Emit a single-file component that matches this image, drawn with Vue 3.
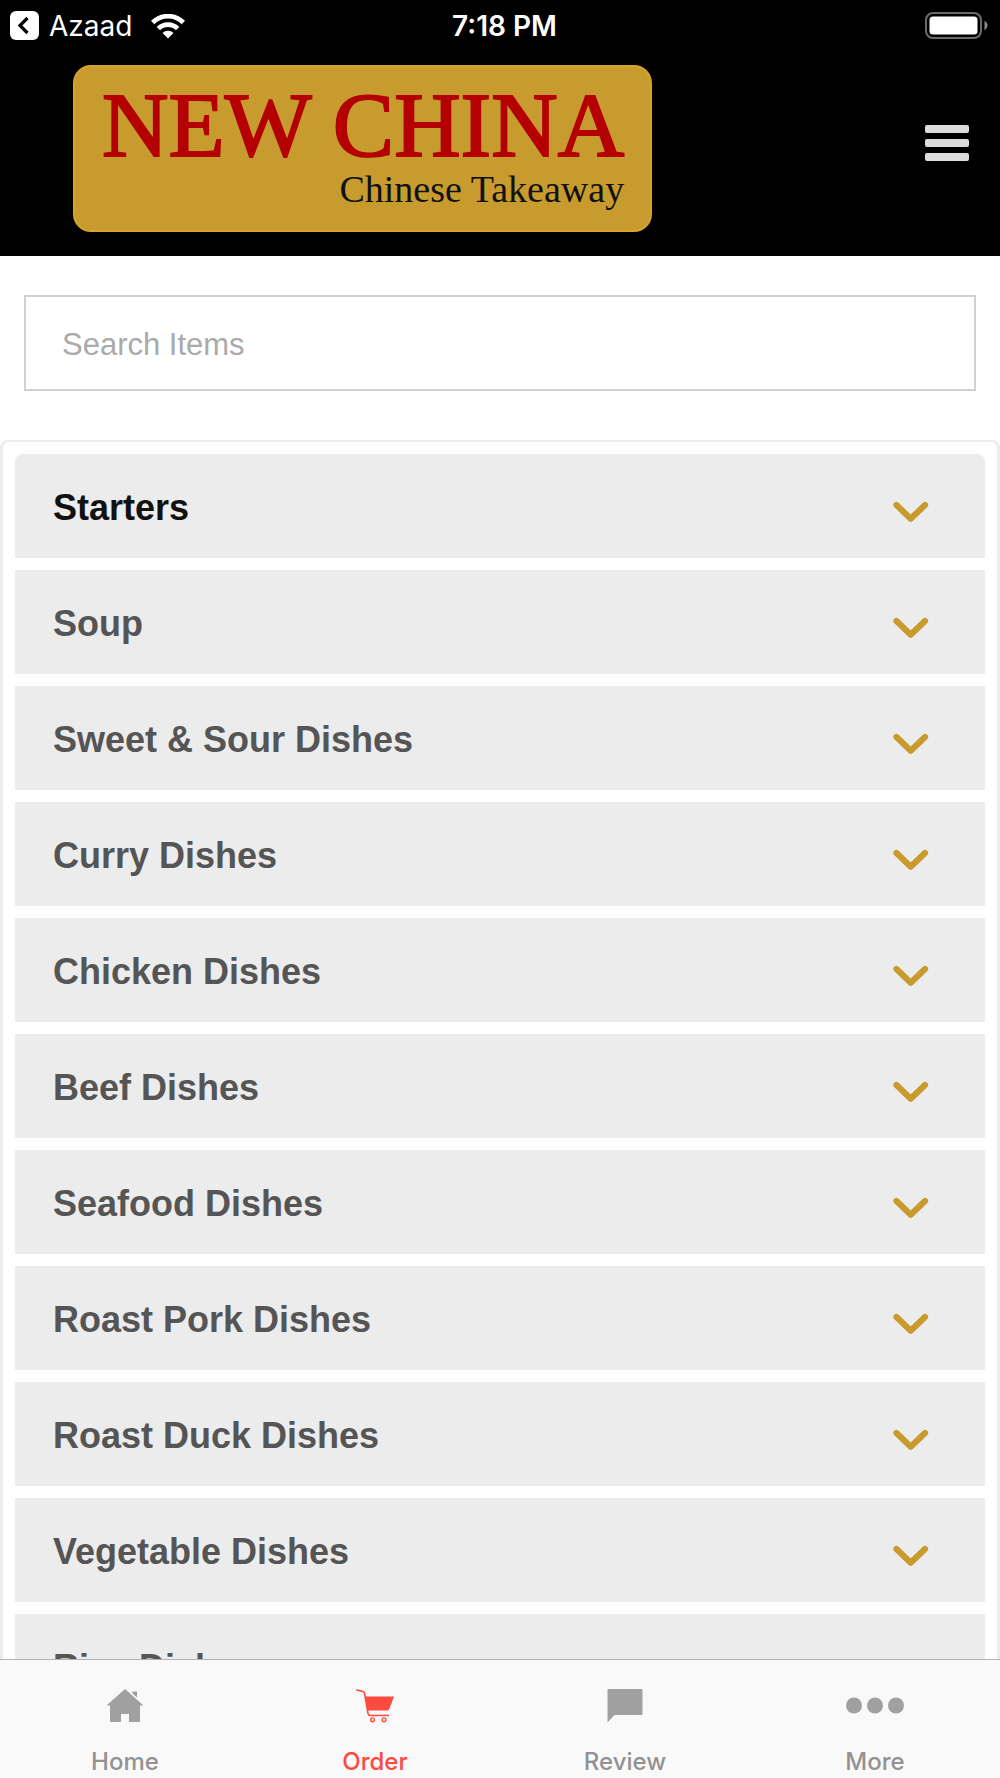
<script setup>
import { ref } from 'vue'

const categories = [
  'Starters',
  'Soup',
  'Sweet & Sour Dishes',
  'Curry Dishes',
  'Chicken Dishes',
  'Beef Dishes',
  'Seafood Dishes',
  'Roast Pork Dishes',
  'Roast Duck Dishes',
  'Vegetable Dishes',
  'Rice Dishes',
]
const selected = ref('Starters')
const search = ref('')
</script>

<template>
  <div class="app">
    <div class="status">
      <a class="back" href="#">
        <svg width="30" height="30" viewBox="0 0 30 30" aria-hidden="true">
          <rect width="29" height="29" rx="6" fill="#fff" />
          <path d="M17.500 7 L10 14.500 L17.500 22" fill="none" stroke="#000" stroke-width="3.200" />
        </svg>
        <span>Azaad</span>
        <svg class="wifi" width="34" height="25" viewBox="0 0 34 25" aria-hidden="true">
          <g fill="none" stroke="#fff" stroke-width="4.800">
            <path d="M1.600 8.500 A22 22 0 0 1 32.400 8.500" />
            <path d="M7.400 14.600 A13.800 13.800 0 0 1 26.600 14.600" />
          </g>
          <path d="M17 24.500 L11.500 19 A7.800 7.800 0 0 1 22.500 19 Z" fill="#fff" />
        </svg>
      </a>
      <span class="time">7:18 PM</span>
      <svg class="battery" width="64" height="30" viewBox="0 0 64 30" aria-label="Battery full">
        <rect x="1" y="2" width="55" height="25" rx="7" fill="none" stroke="#6b6b6b" stroke-width="2" />
        <rect x="4.500" y="5.500" width="48" height="18" rx="3.500" fill="#fff" />
        <path d="M59.500 10 Q62.500 11.500 62.500 14.500 Q62.500 17.500 59.500 19.500 Z" fill="#8a8a8a" />
      </svg>
    </div>

    <header class="header">
      <a class="logo" href="#">
        <span class="logo-name">NEW CHINA</span>
        <span class="logo-sub">Chinese Takeaway</span>
      </a>
      <button class="menu" type="button" aria-label="Menu">
        <span></span><span></span><span></span>
      </button>
    </header>

    <main class="content">
      <input v-model="search" class="search" type="text" placeholder="Search Items" aria-label="Search Items" />
      <div class="list">
        <button
          v-for="name in categories"
          :key="name"
          type="button"
          class="category"
          :class="{ active: name === selected }"
          @click="selected = name"
        >
          <span>{{ name }}</span>
          <svg width="36" height="22" viewBox="0 0 36 22" aria-hidden="true">
            <path d="M3.500 4 L17.700 17.800 L32 4" fill="none" stroke="#c89b2c" stroke-width="6.200" stroke-linecap="round" stroke-linejoin="round" />
          </svg>
        </button>
      </div>
    </main>

    <nav class="tabs">
      <a class="tab" href="#">
        <svg width="38" height="34" viewBox="0 0 38 34" aria-hidden="true">
          <path d="M19 0 L37.500 16.500 H34 V33 H23 V25 H15 V33 H4 V16.500 H.500 Z" fill="#a0a0a0" />
          <path d="M26.500 2.500 H31 V8.500 L26.500 4.500 Z" fill="#a0a0a0" />
        </svg>
        <span>Home</span>
      </a>
      <a class="tab current" href="#" aria-current="page">
        <svg width="38" height="34" viewBox="0 0 38 34" aria-hidden="true">
          <path d="M.800 1 L7 2.500 Q8.300 3 8.600 4.500 L12 24.500 Q12.500 26.500 14.500 26.500 H32.500" fill="none" stroke="#ff4a3f" stroke-width="1.600" stroke-linecap="round" />
          <path d="M9 7.500 H38 L33.500 19.500 Q33 21.500 31 21.500 H11.500 Z" fill="#ff4a3f" />
          <circle cx="16.500" cy="30.800" r="1.900" fill="none" stroke="#ff4a3f" stroke-width="1.400" />
          <circle cx="28" cy="30.800" r="1.900" fill="none" stroke="#ff4a3f" stroke-width="1.400" />
        </svg>
        <span>Order</span>
      </a>
      <a class="tab" href="#">
        <svg width="36" height="34" viewBox="0 0 36 34" aria-hidden="true">
          <path d="M1.500 0 H34.500 Q35.500 0 35.500 1 V25 Q35.500 26 34.500 26 H7.500 L.500 33.500 V1 Q.500 0 1.500 0 Z" fill="#a0a0a0" />
        </svg>
        <span>Review</span>
      </a>
      <a class="tab" href="#">
        <svg width="60" height="34" viewBox="0 0 60 34" aria-hidden="true">
          <g fill="#a0a0a0">
            <circle cx="9" cy="16.500" r="8" />
            <circle cx="30" cy="16.500" r="8" />
            <circle cx="51" cy="16.500" r="8" />
          </g>
        </svg>
        <span>More</span>
      </a>
    </nav>
  </div>
</template>

<style>
body {
  margin: 0;
}
</style>

<style scoped>
.app {
  display: flex;
  flex-direction: column;
  height: 100vh;
  background: #fff;
  font-family: "Liberation Sans", Arial, sans-serif;
}
.app * {
  box-sizing: border-box;
}
a {
  color: inherit;
  text-decoration: none;
}
button {
  border: 0;
  font: inherit;
  cursor: pointer;
}
.status {
  flex: none;
  display: grid;
  grid-template-columns: 1fr auto 1fr;
  align-items: center;
  height: 50px;
  padding: 2px 11px 0 10px;
  background: #000;
  color: #fff;
  font-family: Inter, sans-serif;
  font-size: 28px;
  line-height: 32px;
}
.back {
  display: flex;
  align-items: center;
  gap: 9px;
}
.wifi {
  margin-left: 10px;
}
.time {
  padding-left: 10px;
  font-weight: 600;
}
.battery {
  justify-self: end;
}
.header {
  flex: none;
  display: flex;
  align-items: center;
  justify-content: space-between;
  padding: 15px 31px 24px 73px;
  background: #000;
}
.logo {
  display: flex;
  flex-direction: column;
  align-items: flex-end;
  padding: 18px 26px 21px 27px;
  border: 2px solid #d6a32d;
  border-radius: 18px;
  background: #c89b2e;
  font-family: "Liberation Serif", "Times New Roman", serif;
}
.logo-name {
  color: #b40000;
  font-size: 92px;
  line-height: 80px;
  -webkit-text-stroke: 2px #b40000;
}
.logo-sub {
  margin-top: 4px;
  color: #111;
  font-size: 38px;
  line-height: 40px;
}
.menu {
  display: flex;
  flex-direction: column;
  gap: 6px;
  width: 44px;
  margin-bottom: 12px;
  padding: 0;
  background: none;
}
.menu span {
  height: 8px;
  border-radius: 2px;
  background: #dcdcdc;
}
.content {
  flex: 1;
  min-height: 0;
  overflow: hidden;
  display: flex;
  flex-direction: column;
}
.search {
  flex: none;
  height: 96px;
  margin: 39px 24px 49px;
  padding: 3px 36px 0;
  border: 2px solid #d0d0d0;
  border-radius: 0;
  background: #fff;
  color: #555;
  font: 31px "Liberation Sans", Arial, sans-serif;
  outline: none;
}
.search::placeholder {
  color: #aaa;
}
.list {
  flex: none;
  display: flex;
  flex-direction: column;
  gap: 12px;
  padding: 12px;
  border: solid #ececec;
  border-width: 2px 3px;
  border-radius: 8px;
}
.category {
  display: flex;
  align-items: center;
  justify-content: space-between;
  height: 104px;
  padding: 3px 56px 0 38px;
  background: #ececec;
  color: #555;
  font-size: 36px;
  font-weight: 700;
  text-align: left;
}
.category:first-child {
  border-radius: 8px 8px 0 0;
}
.category.active {
  color: #111;
}
.category svg {
  margin-top: 8px;
}
.tabs {
  flex: none;
  display: grid;
  grid-template-columns: repeat(4, 1fr);
  height: 119px;
  border-top: 1px solid #b2b2b2;
  background: #f9f9f9;
}
.tab {
  display: flex;
  flex-direction: column;
  align-items: center;
  gap: 24px;
  padding-top: 29px;
  color: #929292;
  font-family: Inter, sans-serif;
  font-size: 24px;
  font-weight: 500;
  line-height: 30px;
}
.tab.current {
  color: #ff4a3f;
}
</style>
